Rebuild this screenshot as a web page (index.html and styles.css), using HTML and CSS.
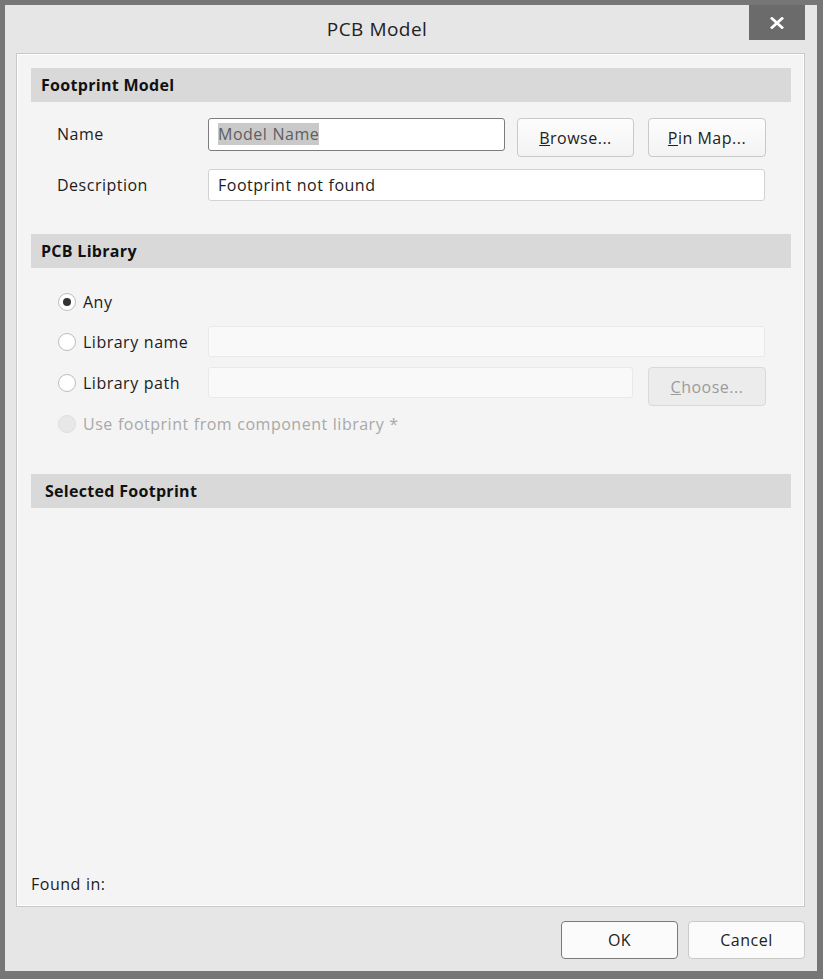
FILE: index.html
```html
<!doctype html>
<html lang="en">
	<head>
		<meta charset="UTF-8" />
		<meta name="viewport" content="width=device-width, initial-scale=1.0" />
		<title>PCB Model</title>
		<link rel="stylesheet" href="styles.css">
	</head>

	<body>
		<div class="window">
			<div class="titlebar">
				<div class="title">PCB Model</div>
				<button class="close-btn" aria-label="Close">
					<svg width="14" height="12" viewBox="0 0 14 12">
						<path d="M2 1.5 L12 10.5 M12 1.5 L2 10.5" stroke="#fff" stroke-width="2.8" stroke-linecap="square" fill="none" />
					</svg>
				</button>
			</div>

			<div class="panel">
				<div class="section-head">Footprint Model</div>

				<div class="field-row name-row">
					<span class="field-label">Name</span>
					<div class="text-input focused name-input"><span class="selected-text">Model Name</span></div>
					<button class="btn browse-btn"><u>B</u>rowse...</button>
					<button class="btn pinmap-btn"><u>P</u>in Map...</button>
				</div>

				<div class="field-row desc-row">
					<span class="field-label">Description</span>
					<div class="text-input desc-input">Footprint not found</div>
				</div>

				<div class="section-head library-head">PCB Library</div>

				<div class="radio-row any-row">
					<label class="radio-label"><span class="radio checked"></span>Any</label>
				</div>
				<div class="radio-row libname-row">
					<label class="radio-label"><span class="radio"></span>Library name</label>
					<div class="text-input disabled libname-input"></div>
				</div>
				<div class="radio-row libpath-row">
					<label class="radio-label"><span class="radio"></span>Library path</label>
					<div class="text-input disabled libpath-input"></div>
					<button class="btn disabled choose-btn"><u>C</u>hoose...</button>
				</div>
				<div class="radio-row component-row">
					<label class="radio-label muted"><span class="radio disabled"></span>Use footprint from component library *</label>
				</div>

				<div class="section-head selected-head">Selected Footprint</div>

				<div class="found-in">Found in:</div>
			</div>

			<div class="dialog-buttons">
				<button class="btn dialog-btn default">OK</button>
				<button class="btn dialog-btn">Cancel</button>
			</div>
		</div>
	</body>
</html>
```

FILE: styles.css
```css
body {
	margin: 0;
	background: #767676;
	font-family: "Open Sans", "Noto Sans", sans-serif;
	font-size: 16px;
	letter-spacing: 0.5px;
	word-spacing: 0.5px;
	color: #1c1c1c;
}

.window {
	margin: 5px 6px 8px 5px;
	height: 966px;
	background: #e6e6e6;
	display: flex;
	flex-direction: column;
}

.titlebar {
	height: 48px;
	display: flex;
	align-items: flex-start;
}

.title {
	flex: 1;
	text-align: center;
	font-size: 19px;
	letter-spacing: 0.4px;
	line-height: 48px;
	color: #222;
}

.close-btn {
	width: 56px;
	height: 35px;
	margin-right: 12px;
	padding: 0;
	border: none;
	background: #6b6b6b;
	display: flex;
	align-items: center;
	justify-content: center;
}

.panel {
	margin: 0 12px 0 11px;
	height: 854px;
	box-sizing: border-box;
	border: 1px solid #c9c9c9;
	box-shadow: inset 0 0 0 1px #fff;
	background: #f4f4f4;
	padding: 14px 13px 0 14px;
	display: flex;
	flex-direction: column;
}

.section-head {
	height: 34px;
	line-height: 34px;
	padding-left: 10px;
	background: #d9d9d9;
	font-weight: 700;
	letter-spacing: 0.3px;
	word-spacing: 0;
	color: #111;
}

/* footprint model rows */
.field-row {
	display: flex;
	align-items: flex-start;
	padding-left: 26px;
}

.name-row {
	margin-top: 16px;
}

.desc-row {
	margin-top: 12px;
}

.field-label {
	width: 151px;
	line-height: 33px;
}

.text-input {
	box-sizing: border-box;
	background: #fff;
	border: 1px solid #d2d2d2;
	border-radius: 3px;
	padding-left: 9px;
	line-height: 30px;
	white-space: nowrap;
}

.text-input.focused {
	border-color: #7c7c7c;
}

.text-input.disabled {
	background: #f9f9f9;
	border-color: #e9e9e9;
}

.name-input {
	width: 297px;
	height: 33px;
}

.selected-text {
	background: #c9c9c9;
	color: #5e5e5e;
}

.desc-input {
	width: 557px;
	height: 32px;
}

.btn {
	box-sizing: border-box;
	background: linear-gradient(#fdfdfd, #f3f3f3);
	border: 1px solid #c9c9c9;
	border-radius: 4px;
	font-family: inherit;
	font-size: 16px;
	letter-spacing: 0.5px;
	color: #222;
	padding: 0;
}

.btn.disabled {
	background: #ececec;
	border-color: #d9d9d9;
	color: #9b9b9b;
}

.browse-btn {
	margin-left: 12px;
	width: 117px;
	height: 39px;
}

.pinmap-btn {
	margin-left: 14px;
	width: 118px;
	height: 39px;
}

/* pcb library radios */
.library-head {
	margin-top: 32px;
}

.radio-row {
	display: flex;
	align-items: flex-start;
	padding-left: 27px;
}

.any-row {
	margin-top: 18px;
}

.libname-row {
	margin-top: 9px;
}

.libpath-row {
	margin-top: 10px;
}

.component-row {
	margin-top: 2px;
}

.radio-label {
	width: 150px;
	height: 31px;
	display: flex;
	align-items: center;
	white-space: nowrap;
}

.radio-label.muted {
	color: #a8a8a8;
}

.radio {
	width: 18px;
	height: 18px;
	box-sizing: border-box;
	border: 1px solid #bdbdbd;
	border-radius: 50%;
	background: #fff;
	margin-right: 7px;
	display: flex;
	align-items: center;
	justify-content: center;
	flex-shrink: 0;
}

.radio.checked::after {
	content: "";
	width: 8px;
	height: 8px;
	border-radius: 50%;
	background: #333;
}

.radio.disabled {
	background: #e8e8e8;
	border-color: #dedede;
}

.libname-input {
	width: 557px;
	height: 31px;
}

.libpath-input {
	width: 425px;
	height: 31px;
}

.choose-btn {
	margin-left: 15px;
	width: 118px;
	height: 39px;
}

/* selected footprint */
.selected-head {
	margin-top: 35px;
	padding-left: 14px;
}

.found-in {
	margin-top: auto;
	margin-bottom: 12px;
	line-height: 20px;
}

.dialog-buttons {
	display: flex;
	justify-content: flex-end;
	gap: 10px;
	margin: 14px 12px 0 0;
}

.dialog-btn {
	width: 117px;
	height: 38px;
	background: #fbfbfb;
}

.dialog-btn.default {
	border-color: #7a7a7a;
}
```
